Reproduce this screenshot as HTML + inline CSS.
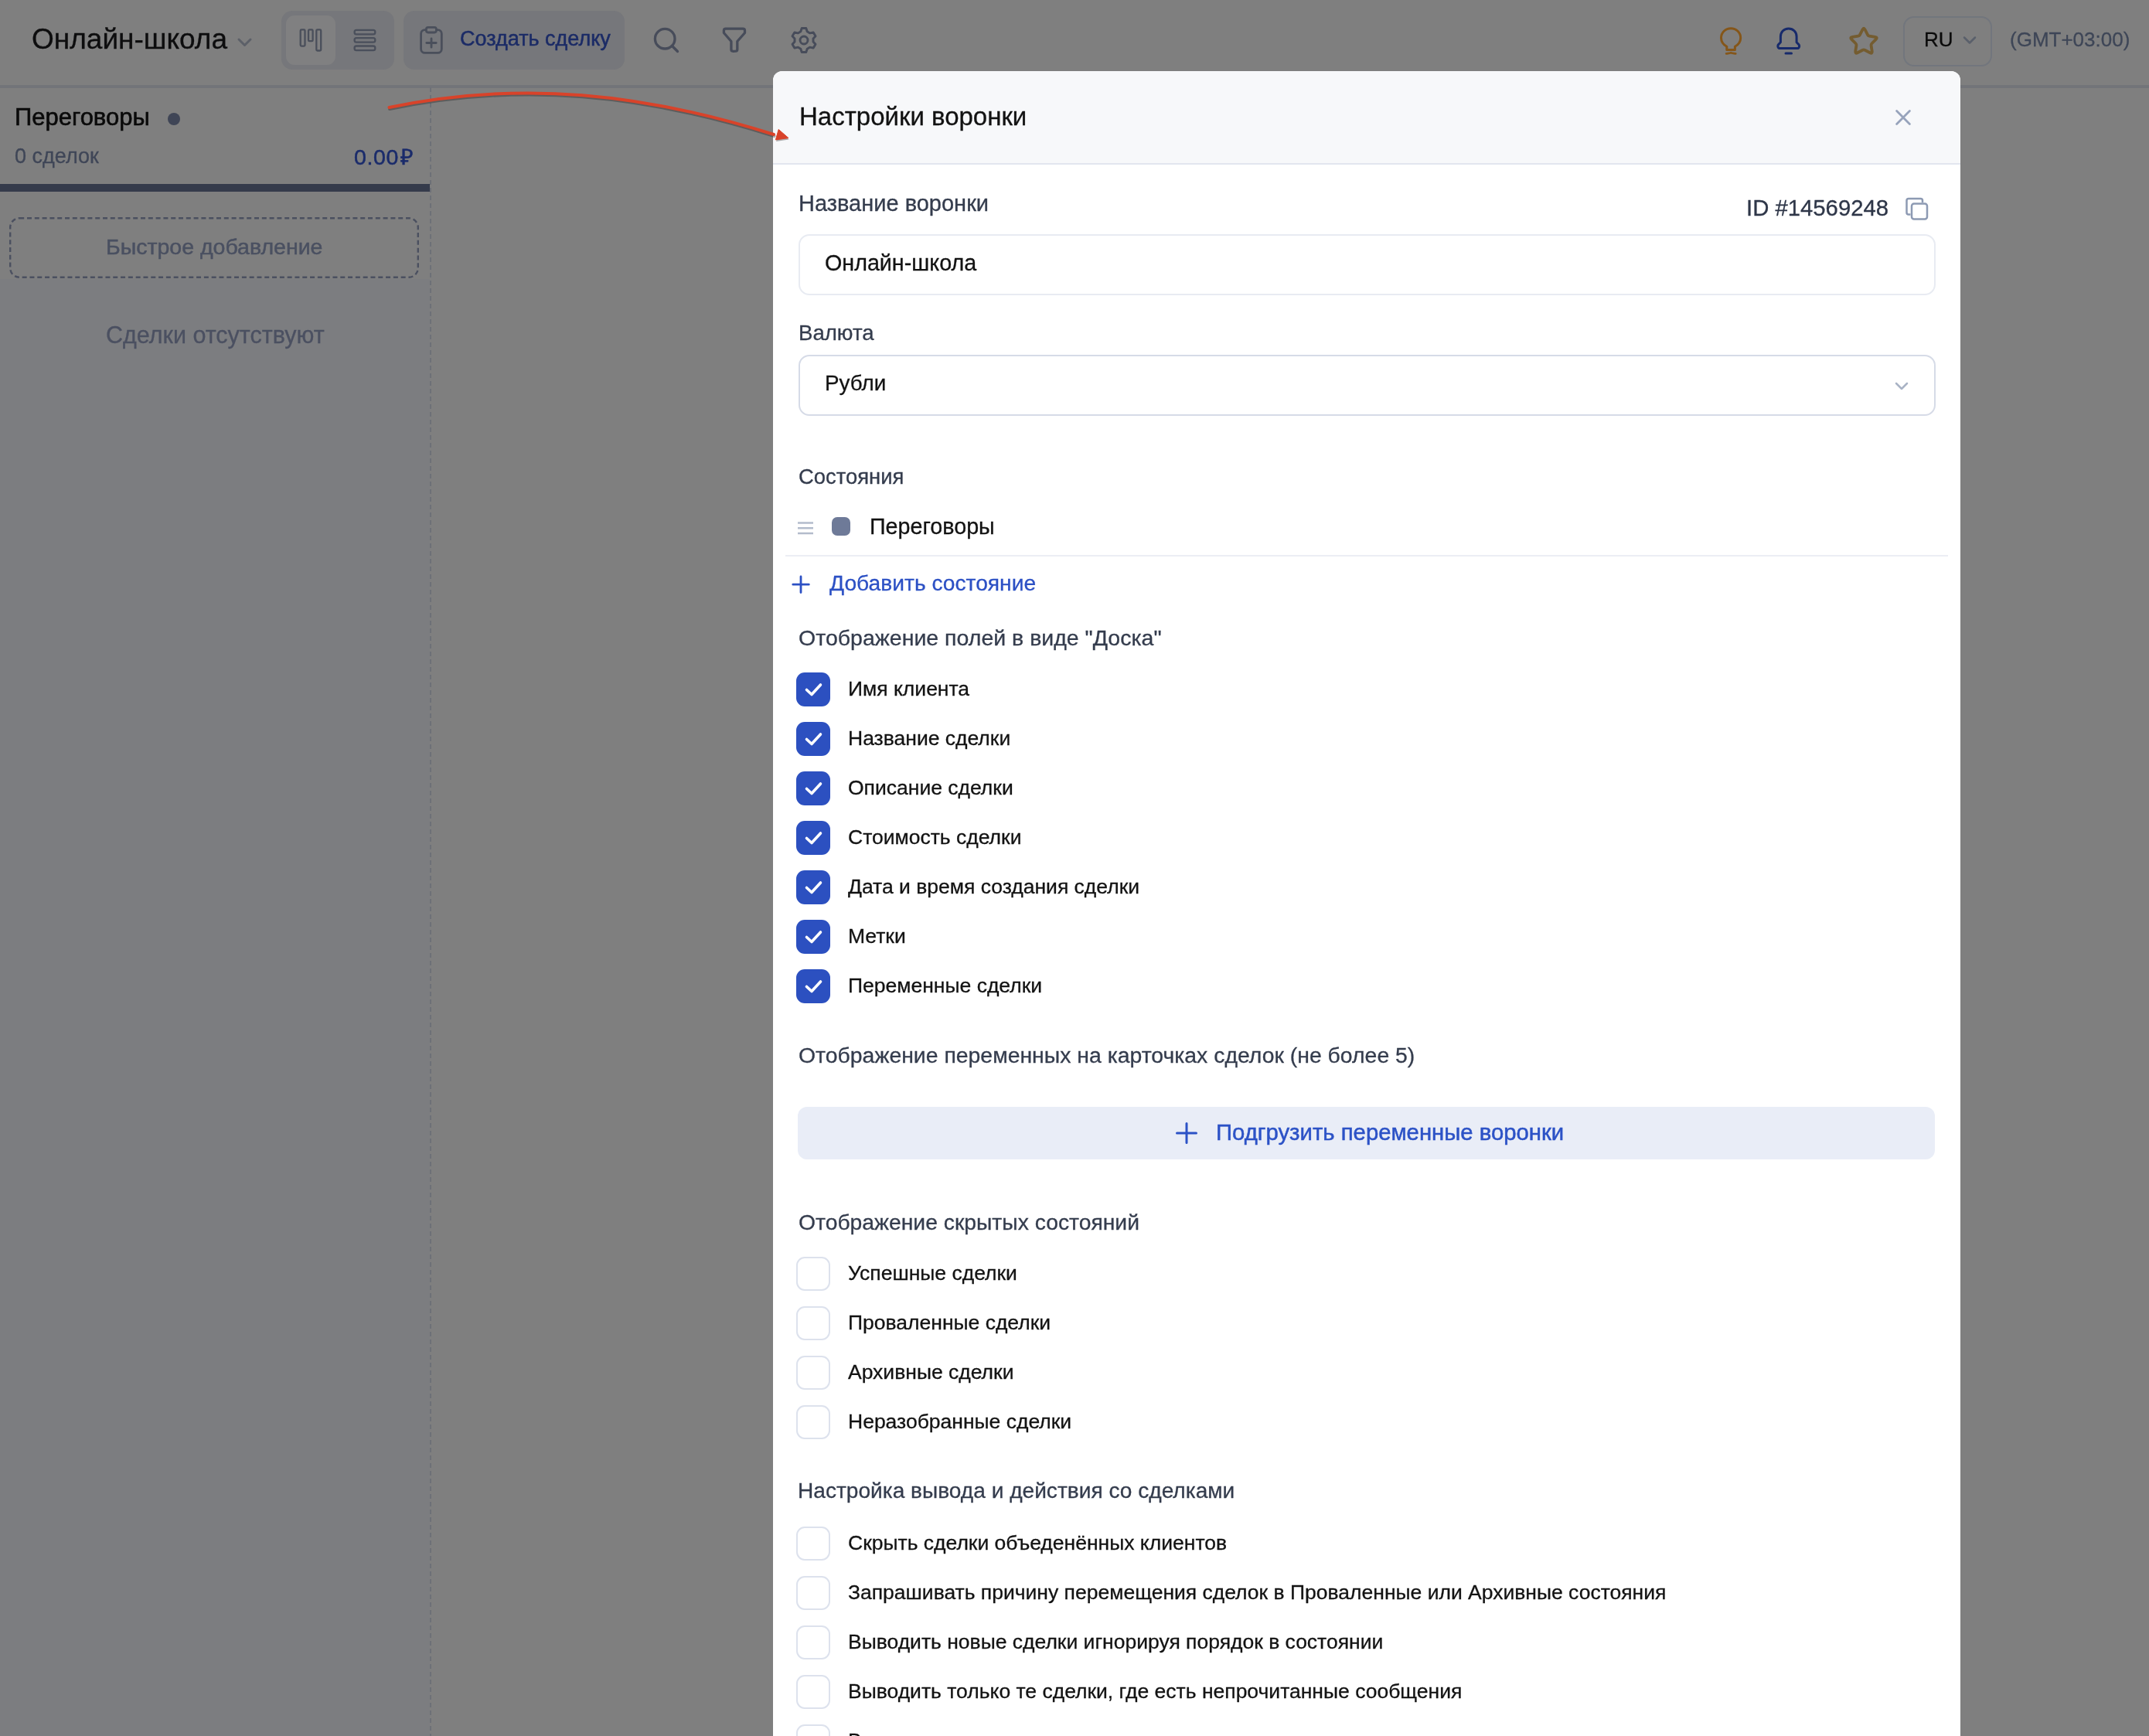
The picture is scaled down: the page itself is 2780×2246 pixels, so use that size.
<!DOCTYPE html>
<html><head><meta charset="utf-8">
<style>
*{box-sizing:border-box;margin:0;padding:0}
html,body{width:2780px;height:2246px;overflow:hidden;background:#7f7f7f;font-family:"Liberation Sans",sans-serif}
.a{position:absolute}
.t{position:absolute;line-height:1;white-space:nowrap;will-change:transform}
svg{position:absolute;overflow:visible}
.sl{color:#343c4d;-webkit-text-stroke:0.3px #343c4d}
.lb{left:1096.5px;font-size:26.5px;color:#121212;-webkit-text-stroke:0.3px #121212}
.cb{position:absolute;left:1030px;width:44px;height:44px;border-radius:11px;border:2px solid #dde2ed;background:#fff}
.cb.on{border:none;background:#2c50c0}

</style></head><body>
<!-- page background / board -->
<div class="a" style="left:0;top:0;width:2780px;height:110px;background:#7f7f7f"></div>
<div class="a" style="left:0;top:110px;width:2780px;height:3.5px;background:#727479"></div>
<div class="a" style="left:0;top:361px;width:556px;height:1885px;background:#7c7d80"></div>
<svg style="left:0;top:0" width="1" height="1"><path d="M557 113V2246" stroke="#6d7077" stroke-width="2" stroke-dasharray="6 4"/></svg>

<!-- header left -->
<div class="t" style="left:41px;top:31.6px;font-size:37px;color:#0d0d0e;-webkit-text-stroke:0.3px #0d0d0e">Онлайн-школа</div>
<svg style="left:0;top:0" width="1" height="1"><polyline points="309,51 316.5,58.5 324,51" fill="none" stroke="#5c6068" stroke-width="3" stroke-linecap="round" stroke-linejoin="round"/></svg>

<div class="a" style="left:364px;top:14px;width:146px;height:76px;border-radius:14px;background:#76777b"></div>
<div class="a" style="left:370px;top:20px;width:64px;height:64px;border-radius:11px;background:#808081"></div>
<svg style="left:0;top:0" width="1" height="1" fill="none" stroke="#4a4f5b" stroke-width="2.3">
 <rect x="388.7" y="38.4" width="5.8" height="21.2" rx="1.3"/>
 <rect x="399" y="38.4" width="5.6" height="14.8" rx="1.3"/>
 <rect x="409.3" y="38.4" width="5.9" height="27.1" rx="1.3"/>
 <rect x="458.6" y="38.8" width="26.7" height="5.6" rx="2.4"/>
 <rect x="458.6" y="49.1" width="26.7" height="5.6" rx="2.4"/>
 <rect x="458.6" y="59.5" width="26.7" height="5.7" rx="2.4"/>
</svg>

<div class="a" style="left:521.5px;top:14px;width:286px;height:76px;border-radius:14px;background:#76777b"></div>
<svg style="left:0;top:0" width="1" height="1" fill="none" stroke="#4a4f5b" stroke-width="2.8" stroke-linecap="round" stroke-linejoin="round">
 <rect x="544.6" y="38.6" width="26.7" height="29.8" rx="5"/>
 <rect x="551.4" y="35.4" width="13" height="6.6" rx="2.4" fill="#76777b"/>
 <path d="M558 50v11.2M551.8 55.5h12.4"/>
</svg>
<div class="t" style="left:595px;top:37.1px;font-size:27px;color:#1b2b66;-webkit-text-stroke:0.5px #1b2b66">Создать сделку</div>

<svg style="left:0;top:0" width="1" height="1" fill="none" stroke="#474c5a" stroke-width="3.3" stroke-linecap="round" stroke-linejoin="round">
 <circle cx="860.2" cy="50.2" r="12.8"/>
 <path d="M870 60L876.5 66.5"/>
 <path d="M936.4 39.5c0-1.4 1-2.4 2.4-2.4h22.3c1.4 0 2.4 1 2.4 2.4v3l-9.7 11v10.5c0 1.2-.8 2-2 2.1l-3.5.2c-1.3 0-2.4-.9-2.4-2.2V53.5l-9.5-11z"/>
</svg>

<svg style="left:0;top:0" width="1" height="1" fill="none" stroke="#474c5a" stroke-width="2.9" stroke-linecap="round" stroke-linejoin="round">
 <circle cx="1040" cy="52" r="5"/>
 <path d="M1037.2 36.5h5.6l1.4 4.3 3.6 2.1 4.4-1 2.8 4.8-3 3.3v4l3 3.3-2.8 4.8-4.4-1-3.6 2.1-1.4 4.3h-5.6l-1.4-4.3-3.6-2.1-4.4 1-2.8-4.8 3-3.3v-4l-3-3.3 2.8-4.8 4.4 1 3.6-2.1z"/>
</svg>
<!-- header right -->
<svg style="left:0;top:0" width="1" height="1" fill="none" stroke-width="3" stroke-linecap="round" stroke-linejoin="round">
 <path stroke="#855619" d="M2233.8 64.5v-4.2c-4.5-2.6-7.3-6.4-7.3-11.3 0-7 5.6-12.3 12.6-12.3s12.6 5.3 12.6 12.3c0 4.9-2.8 8.7-7.3 11.3v4.2z"/>
 <path stroke="#855619" stroke-width="2.8" d="M2233.2 69.4c2-.4 4-.5 6-1.2 2 .7 4 .8 6 1.2"/>
 <path stroke="#172a6b" d="M2313.7 37c-6.2 0-10.3 4.6-10.3 10.5v7.3l-2.6 2.6c-1.8 1.8-.8 5.2 1.8 5.2h22.3c2.6 0 3.6-3.4 1.8-5.2l-2.6-2.6v-7.3c0-5.9-4.1-10.5-10.4-10.5z"/>
 <path stroke="#172a6b" d="M2310 69h7.5"/>
 <path stroke="#745c30" stroke-width="3.8" d="M2409.39 38.26Q2411.00 35.10 2412.61 38.26L2416.07 45.02Q2416.76 46.37 2418.26 46.61L2425.76 47.81Q2429.26 48.37 2426.76 50.88L2421.39 56.25Q2420.32 57.33 2420.56 58.83L2421.74 66.33Q2422.29 69.83 2419.13 68.23L2412.35 64.79Q2411.00 64.10 2409.65 64.79L2402.87 68.23Q2399.71 69.83 2400.26 66.33L2401.44 58.83Q2401.68 57.33 2400.61 56.25L2395.24 50.88Q2392.74 48.37 2396.24 47.81L2403.74 46.61Q2405.24 46.37 2405.93 45.02Z"/>
</svg>
<div class="a" style="left:2461.5px;top:20.5px;width:115px;height:65px;border-radius:14px;border:2px solid #72767d"></div>
<div class="t" style="left:2489px;top:38.1px;font-size:26px;color:#0a0a0a;-webkit-text-stroke:0.3px #0a0a0a">RU</div>
<svg style="left:0;top:0" width="1" height="1"><polyline points="2541,48.5 2548,55.5 2555,48.5" fill="none" stroke="#5a606b" stroke-width="2.5" stroke-linecap="round" stroke-linejoin="round"/></svg>
<div class="t" style="left:2599.7px;top:38.1px;font-size:26px;color:#3e4657;-webkit-text-stroke:0.3px #3e4657">(GMT+03:00)</div>

<!-- column -->
<div class="t" style="left:19px;top:136.1px;font-size:31px;color:#0a0a0a;-webkit-text-stroke:0.6px #0a0a0a">Переговоры</div>
<div class="a" style="left:217px;top:146px;width:16px;height:16px;border-radius:50%;background:#3f4556"></div>
<div class="t" style="left:19px;top:189.4px;font-size:27px;color:#3f4657;-webkit-text-stroke:0.3px #3f4657">0 сделок</div>
<div class="t" style="right:2245px;top:189.2px;font-size:28.5px;color:#1a2b6b;-webkit-text-stroke:0.5px #1a2b6b;letter-spacing:0.6px">0.00<span style="margin-left:2px;letter-spacing:0">₽</span></div>
<div class="a" style="left:0;top:238px;width:556px;height:10px;background:#353b4b"></div>
<svg style="left:0;top:0" width="1" height="1"><rect x="13.2" y="282.2" width="527.6" height="76.6" rx="12" fill="none" stroke="#4b5060" stroke-width="2.4" stroke-dasharray="6 3.8"/></svg>
<div class="t" style="left:137px;top:305px;font-size:28.5px;color:#4a5061;-webkit-text-stroke:0.5px #4a5061">Быстрое добавление</div>
<div class="t" style="left:137px;top:417.8px;font-size:30.5px;color:#4b5061;-webkit-text-stroke:0.3px #4b5061">Сделки отсутствуют</div>



<!-- MODAL -->
<div class="a" id="modal" style="left:1000px;top:92px;width:1536px;height:2154px;background:#fff;border-radius:12px 12px 0 0;overflow:hidden">
 <div class="a" style="left:0;top:0;width:1536px;height:121px;background:#f7f8fa;border-bottom:2px solid #e2e6ef"></div>
</div>
<div class="t" style="left:1033.5px;top:133.6px;font-size:33px;color:#121212;-webkit-text-stroke:0.3px #121212">Настройки воронки</div>
<svg style="left:0;top:0" width="1" height="1"><path d="M2453.6 143.6l16.8 16.8M2470.4 143.6l-16.8 16.8" stroke="#97a3bb" stroke-width="2.8" stroke-linecap="round"/></svg>

<!-- modal body -->
<div class="t" style="left:2259px;top:253.91px;font-size:29.3px;color:#2e3648;-webkit-text-stroke:0.3px #2e3648">ID #14569248</div>
<svg style="left:0;top:0" width="1" height="1" fill="none" stroke="#8d9ab3" stroke-width="2.5" stroke-linejoin="round">
 <path d="M2471.5 277.5h-2.5c-1.6 0-2.5-.9-2.5-2.5v-15.5c0-1.6.9-2.5 2.5-2.5h15.5c1.6 0 2.5.9 2.5 2.5v2.5"/>
 <rect x="2473" y="263.5" width="20" height="20" rx="3" fill="#fff"/>
</svg>
<div class="t sl" style="left:1032.6px;top:248.86px;font-size:29px">Название воронки</div>
<div class="a" style="left:1032.5px;top:302.5px;width:1471px;height:79px;border:2px solid #e8ebf2;border-radius:14px"></div>
<div class="t" style="left:1066.6px;top:326.11px;font-size:28.7px;color:#121212;-webkit-text-stroke:0.3px #121212">Онлайн-школа</div>
<div class="t sl" style="left:1032.6px;top:417.08px;font-size:27.6px">Валюта</div>
<div class="a" style="left:1032.5px;top:458.5px;width:1471px;height:79px;border:2px solid #d6dbe7;border-radius:14px"></div>
<div class="t" style="left:1066.6px;top:482.35px;font-size:27.8px;color:#121212;-webkit-text-stroke:0.3px #121212">Рубли</div>
<svg style="left:0;top:0" width="1" height="1"><polyline points="2453,496 2460,503 2467,496" fill="none" stroke="#a9b3c5" stroke-width="2.5" stroke-linecap="round" stroke-linejoin="round"/></svg>

<div class="t sl" style="left:1033.3px;top:603.21px;font-size:27.4px">Состояния</div>
<svg style="left:0;top:0" width="1" height="1" stroke="#b3bccc" stroke-width="2.5"><path d="M1032 676.5h20M1032 683.2h20M1032 690h20"/></svg>
<div class="a" style="left:1076px;top:669px;width:24px;height:24px;border-radius:7px;background:#6e7a98"></div>
<div class="t" style="left:1125px;top:667.41px;font-size:28.7px;color:#121212;-webkit-text-stroke:0.3px #121212">Переговоры</div>
<div class="a" style="left:1016px;top:718px;width:1504px;height:2px;background:#eceef4"></div>
<svg style="left:0;top:0" width="1" height="1" stroke="#2c50c4" stroke-width="2.8" stroke-linecap="round"><path d="M1036 746v20.5M1025.8 756.2h20.5"/></svg>
<div class="t" style="left:1072.6px;top:739.59px;font-size:28.2px;color:#2c50c4;-webkit-text-stroke:0.3px #2c50c4">Добавить состояние</div>
<div class="t sl" style="left:1033px;top:810.84px;font-size:28.5px">Отображение полей в виде "Доска"</div>
<div class="cb on" style="top:870px"></div>
<svg style="left:0;top:0" width="1" height="1"><polyline points="1043.5,892.5 1050,898.5 1061.5,886.0" fill="none" stroke="#fff" stroke-width="3.6" stroke-linecap="round" stroke-linejoin="round"/></svg>
<div class="t lb" style="top:877.55px">Имя клиента</div>
<div class="cb on" style="top:934px"></div>
<svg style="left:0;top:0" width="1" height="1"><polyline points="1043.5,956.5 1050,962.5 1061.5,950.0" fill="none" stroke="#fff" stroke-width="3.6" stroke-linecap="round" stroke-linejoin="round"/></svg>
<div class="t lb" style="top:941.55px">Название сделки</div>
<div class="cb on" style="top:998px"></div>
<svg style="left:0;top:0" width="1" height="1"><polyline points="1043.5,1020.5 1050,1026.5 1061.5,1014.0" fill="none" stroke="#fff" stroke-width="3.6" stroke-linecap="round" stroke-linejoin="round"/></svg>
<div class="t lb" style="top:1005.55px">Описание сделки</div>
<div class="cb on" style="top:1062px"></div>
<svg style="left:0;top:0" width="1" height="1"><polyline points="1043.5,1084.5 1050,1090.5 1061.5,1078.0" fill="none" stroke="#fff" stroke-width="3.6" stroke-linecap="round" stroke-linejoin="round"/></svg>
<div class="t lb" style="top:1069.55px">Стоимость сделки</div>
<div class="cb on" style="top:1126px"></div>
<svg style="left:0;top:0" width="1" height="1"><polyline points="1043.5,1148.5 1050,1154.5 1061.5,1142.0" fill="none" stroke="#fff" stroke-width="3.6" stroke-linecap="round" stroke-linejoin="round"/></svg>
<div class="t lb" style="top:1133.55px">Дата и время создания сделки</div>
<div class="cb on" style="top:1190px"></div>
<svg style="left:0;top:0" width="1" height="1"><polyline points="1043.5,1212.5 1050,1218.5 1061.5,1206.0" fill="none" stroke="#fff" stroke-width="3.6" stroke-linecap="round" stroke-linejoin="round"/></svg>
<div class="t lb" style="top:1197.55px">Метки</div>
<div class="cb on" style="top:1254px"></div>
<svg style="left:0;top:0" width="1" height="1"><polyline points="1043.5,1276.5 1050,1282.5 1061.5,1270.0" fill="none" stroke="#fff" stroke-width="3.6" stroke-linecap="round" stroke-linejoin="round"/></svg>
<div class="t lb" style="top:1261.55px">Переменные сделки</div>
<div class="cb" style="top:1626px"></div>
<div class="t lb" style="top:1633.55px">Успешные сделки</div>
<div class="cb" style="top:1690px"></div>
<div class="t lb" style="top:1697.55px">Проваленные сделки</div>
<div class="cb" style="top:1754px"></div>
<div class="t lb" style="top:1761.55px">Архивные сделки</div>
<div class="cb" style="top:1818px"></div>
<div class="t lb" style="top:1825.55px">Неразобранные сделки</div>
<div class="cb" style="top:1975px"></div>
<div class="t lb" style="top:1982.55px">Скрыть сделки объеденённых клиентов</div>
<div class="cb" style="top:2039px"></div>
<div class="t lb" style="top:2046.55px">Запрашивать причину перемещения сделок в Проваленные или Архивные состояния</div>
<div class="cb" style="top:2103px"></div>
<div class="t lb" style="top:2110.55px">Выводить новые сделки игнорируя порядок в состоянии</div>
<div class="cb" style="top:2167px"></div>
<div class="t lb" style="top:2174.55px">Выводить только те сделки, где есть непрочитанные сообщения</div>
<div class="cb" style="top:2231px"></div>
<div class="t lb" style="top:2238.55px">В</div>
<div class="t sl" style="left:1032.7px;top:1350.56px;font-size:28.4px">Отображение переменных на карточках сделок (не более 5)</div>
<div class="a" style="left:1032px;top:1432px;width:1471px;height:68px;border-radius:12px;background:#e9edf7"></div>
<svg style="left:0;top:0" width="1" height="1" stroke="#2c52c6" stroke-width="3" stroke-linecap="round"><path d="M1535 1453.5v25M1522.5 1466h25"/></svg>
<div class="t" style="left:1572.9px;top:1450.4px;font-size:29.3px;color:#2c52c6;-webkit-text-stroke:0.5px #2c52c6">Подгрузить переменные воронки</div>
<div class="t sl" style="left:1033.3px;top:1566.97px;font-size:28.3px">Отображение скрытых состояний</div>
<div class="t sl" style="left:1032.4px;top:1914.6px;font-size:28.1px">Настройка вывода и действия со сделками</div>

<!-- arrow -->
<svg style="left:0;top:0" width="1" height="1">
 <g transform="translate(0.6,2)" opacity="0.35" fill="#202020" stroke="#202020">
 <path d="M503.5 139C675 103.5 832.1 120.7 1001 174" fill="none" stroke-width="4" stroke-linecap="round"/>
 <path d="M1020 178.6L1007.2 167.4L1003.4 180.9z" stroke="none"/>
 </g>
 <path d="M503.5 139C675 103.5 832.1 120.7 1001 174" fill="none" stroke="#d8432a" stroke-width="4" stroke-linecap="round"/>
 <path d="M1020 178.6L1007.2 167.4L1003.4 180.9z" fill="#d8432a" stroke="#d8432a" stroke-width="1" stroke-linejoin="round"/>
</svg>
</body></html>
